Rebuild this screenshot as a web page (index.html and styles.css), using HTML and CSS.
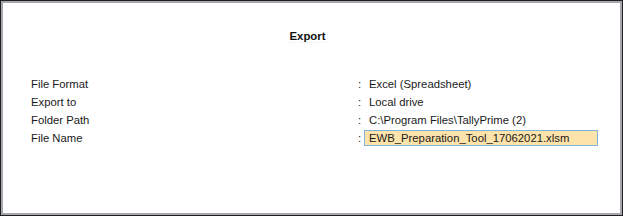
FILE: index.html
```html
<!DOCTYPE html>
<html lang="en">
<head>
    <meta charset="UTF-8">
    <meta name="viewport" content="width=device-width, initial-scale=1.0">
    <title>Export</title>
    <link rel="stylesheet" href="styles.css">
</head>
<body>

    <div class="frame">
        <div class="panel">
            <div class="title-row">
                <span class="title">Export</span>
            </div>

            <div class="fields">
                <div class="label">File Format</div>
                <div class="colon">:</div>
                <div class="value">Excel (Spreadsheet)</div>

                <div class="label">Export to</div>
                <div class="colon">:</div>
                <div class="value">Local drive</div>

                <div class="label">Folder Path</div>
                <div class="colon">:</div>
                <div class="value">C:\Program Files\TallyPrime (2)</div>

                <div class="label">File Name</div>
                <div class="colon">:</div>
                <div class="value"><span class="input">EWB_Preparation_Tool_17062021.xlsm</span></div>
            </div>
        </div>
    </div>

</body>
</html>
```

FILE: styles.css
```css
* {
    margin: 0;
    padding: 0;
    box-sizing: border-box;
}

body, html {
    width: 100%;
    height: 100%;
    background: #fff;
    font-family: 'Liberation Sans', Arial, sans-serif;
    font-size: 11.3px;
    color: #1a1a1a;
    overflow: hidden;
}

.frame {
    width: 623px;
    height: 216px;
    border: 1px solid #202020;
}

.panel {
    width: 100%;
    height: 100%;
    border: 2px solid #a4a7ab;
    padding: 26px 0 0 28px;
}

.title-row {
    display: flex;
    justify-content: center;
    padding-right: 36px;
    height: 14px;
    line-height: 14px;
}

.title {
    font-weight: bold;
    font-size: 11.4px;
    color: #111;
    border-bottom: 1px dotted #ececec;
}

.fields {
    display: grid;
    grid-template-columns: 325px 8px 240px;
    grid-auto-rows: 18px;
    line-height: 18px;
    margin-top: 32px;
}

.colon {
    padding-left: 2px;
}

.value {
    padding-left: 5px;
    white-space: nowrap;
}

.input {
    display: block;
    width: 234px;
    height: 16px;
    line-height: 14px;
    margin: 1px 0 0 -5px;
    padding-left: 4px;
    background: #fde3a9;
    border: 1px solid #7fb2dc;
}
```
